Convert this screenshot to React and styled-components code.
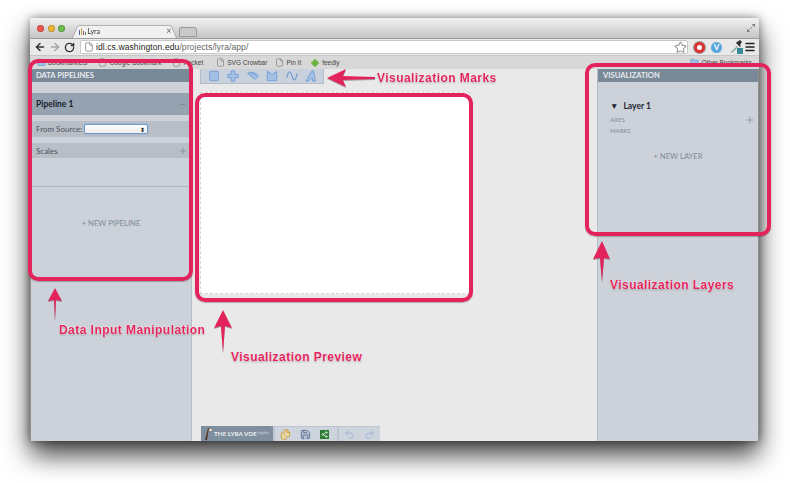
import React from "react";
import styled, { createGlobalStyle } from "styled-components";
import { ArrowLeft, ArrowRight, RotateCw, File, Folder, Star, Menu, Plus, Minus, Undo2, Redo2, Save, Files, Share2 } from "lucide-react";

const MARKS = ["rect", "symbol", "arc", "area", "line", "text"];

const ANNOTATIONS = [
  { text: "Visualization Marks", x: 377, y: 70 },
  { text: "Data Input Manipulation", x: 59, y: 322 },
  { text: "Visualization Preview", x: 231, y: 349 },
  { text: "Visualization Layers", x: 610, y: 277 },
];

const MarkIcon = ({ type }) => {
  const c = "#6f9ad0";
  return (
    <svg width="12" height="12" viewBox="0 0 14 14" fill="#a3c1e6" stroke={c} strokeWidth="1">
      {type === "rect" && <rect x="2" y="1.5" width="10" height="11" rx="1" />}
      {type === "symbol" && <path d="M5 1h4v4h4v4H9v4H5V9H1V5h4z" />}
      {type === "arc" && (
        <>
          <path d="M0.5 4c4-2 9-2 13 3l-4 4z" />
          <path d="M4 5c3-1 5 0 7 2" fill="none" />
        </>
      )}
      {type === "area" && <path d="M1.5 1.5 7 5l5.5-3v10.500h-11z" />}
      {type === "line" && <path d="M1 9c2-10 4-8 6-2s4 7 6-3" fill="none" strokeWidth="1.3" />}
      {type === "text" && <path d="M1 13 8 1h2l2 12H9l-.5-3H6l-1.500 3z" />}
    </svg>
  );
};

const App = () => {
  return (
    <Page>
      <GlobalStyle />
      <Window>
        <TabBar>
          <Light $color="#ee5a52" />
          <Light $color="#f0b437" />
          <Light $color="#70bd4d" />
          <Tab>
            <Favicon viewBox="0 0 8 8">
              <path d="M0 3h1v5H0z" fill="#46639c" />
              <path d="M2 1h1v7H2z" fill="#c9a13d" />
              <path d="M4 4h1v4H4z" fill="#a84b7a" />
              <path d="M6 5h1v3H6z" fill="#5a8a5a" />
            </Favicon>
            Lyra
            <TabClose>×</TabClose>
          </Tab>
          <NewTab />
          <Expand viewBox="0 0 10 10">
            <path d="M6 0h4v4zM0 10V6l4 4z" fill="#777" />
            <path d="M7 3 3 7" stroke="#777" />
          </Expand>
        </TabBar>
        <Toolbar>
          <ArrowLeft size={12} strokeWidth={3} color="#333" />
          <ArrowRight size={12} strokeWidth={3} color="#a5a5a5" />
          <RotateCw size={11} strokeWidth={3} color="#333" />
          <UrlBox>
            <File size={10} color="#888" />
            <Host>idl.cs.washington.edu</Host>
            <UrlPath>/projects/lyra/app/</UrlPath>
            <UrlStar size={13} color="#999" />
          </UrlBox>
          <OperaIcon />
          <VeeIcon>V</VeeIcon>
          <svg width="14" height="14" viewBox="0 0 14 14">
            <path d="M2 12 8 6l1 1-6 6z" fill="#8aa" />
            <path d="M8 2l3-2 2 2-2 3 1 1-1 1-4-4 1-1z" fill="#333" />
            <rect x="8" y="8" width="6" height="6" fill="#3a8a9a" />
          </svg>
          <Menu size={12} strokeWidth={3} color="#222" />
        </Toolbar>
        <BookmarkBar>
          <Bookmark>
            <Folder size={9} color="#6a9fd8" fill="#9cc0e6" />
            Bookmarklets
          </Bookmark>
          <Bookmark>
            <File size={9} color="#888" />
            Google Bookmark
          </Bookmark>
          <Bookmark $gap={13}>
            <File size={9} color="#888" />
            Pocket
          </Bookmark>
          <Bookmark $gap={8}>
            <File size={9} color="#888" />
            SVG Crowbar
          </Bookmark>
          <Bookmark>
            <File size={9} color="#888" />
            Pin It
          </Bookmark>
          <Bookmark>
            <FeedlyIcon />
            feedly
          </Bookmark>
          <OtherBookmarks>
            <Folder size={9} color="#6a9fd8" fill="#9cc0e6" />
            Other Bookmarks
          </OtherBookmarks>
        </BookmarkBar>
        <Content>
          <SidePanel>
            <PanelHeader>DATA PIPELINES</PanelHeader>
            <PipelineRow>
              Pipeline 1
              <Minus size={9} color="#75838f" />
            </PipelineRow>
            <SourceRow>
              From Source:
              <SourceSelect>
                <SelectArrows>⬍</SelectArrows>
              </SourceSelect>
            </SourceRow>
            <ScalesRow>
              Scales
              <Plus size={10} color="#88909a" />
            </ScalesRow>
            <NewPipeline>+ NEW PIPELINE</NewPipeline>
          </SidePanel>
          <Center>
            <MarksBar>
              {MARKS.map((m) => (
                <MarkIcon key={m} type={m} />
              ))}
            </MarksBar>
            <Canvas />
            <BottomBar>
              <Brand>
                <svg width="9" height="13" viewBox="0 0 9 13">
                  <path d="M1 13 4 1h1L3 13z" fill="#5a3a2a" />
                  <path d="M5 2h3v2H5z" fill="#e8c9a0" />
                </svg>
                <BrandName>THE LYRA VDE</BrandName>
                <Alpha>alpha</Alpha>
              </Brand>
              <ToolGroup>
                <Files size={11} color="#c49a3a" fill="#ecdca8" />
                <Save size={11} color="#5d6f92" fill="#b9c2d4" />
                <ShareBox>
                  <Share2 size={7} color="#fff" />
                </ShareBox>
              </ToolGroup>
              <ToolGroup>
                <Undo2 size={11} color="#9db4d8" />
                <Redo2 size={11} color="#9db4d8" />
              </ToolGroup>
            </BottomBar>
          </Center>
          <RightPanel>
            <PanelHeader>VISUALIZATION</PanelHeader>
            <LayerTitle>
              <LayerCaret>▼</LayerCaret>
              Layer 1
            </LayerTitle>
            <LayerRow>
              AXES
              <Plus size={10} color="#88909a" />
            </LayerRow>
            <LayerRow>MARKS</LayerRow>
            <NewLayer>+ NEW LAYER</NewLayer>
          </RightPanel>
        </Content>
      </Window>

      <Highlight $x={28} $y={59} $w={165} $h={222} />
      <Highlight $x={195} $y={93} $w={278} $h={209} />
      <Highlight $x={585} $y={63} $w={186} $h={173} />

      <Arrow $x={327} $y={68} viewBox="0 0 48 20" $w={48} $h={20}>
        <path d="M0 10 19 1l-3 7 32 1v2l-32 1 3 7z" />
      </Arrow>
      <Arrow $x={48} $y={288} viewBox="0 0 14 34" $w={14} $h={34}>
        <path d="M7 0l7 13-6-1-1 21-1-21-6 1z" />
      </Arrow>
      <Arrow $x={214} $y={310} viewBox="0 0 18 43" $w={18} $h={43}>
        <path d="M9 0l9 18-7-2-2 27-2-27-7 2z" />
      </Arrow>
      <Arrow $x={593} $y={241} viewBox="0 0 18 41" $w={18} $h={41}>
        <path d="M9 0l8 18-6-1-2 24-2-24-7 1z" />
      </Arrow>

      {ANNOTATIONS.map((a) => (
        <Label key={a.text} $x={a.x} $y={a.y}>
          {a.text}
        </Label>
      ))}
    </Page>
  );
};

export default App;

const GlobalStyle = createGlobalStyle`
  html, body {
    margin: 0;
    background: #fff;
    overflow: hidden;
  }
`;

const Page = styled.div`
  position: relative;
  box-sizing: border-box;
  width: 790px;
  height: 483px;
  padding: 18px 31px 42px 30px;
  font-family: "Lato", "Liberation Sans", sans-serif;
`;

const Window = styled.div`
  display: flex;
  flex-direction: column;
  height: 100%;
  box-shadow: 0 14px 26px rgba(0, 0, 0, 0.75), 0 0 8px rgba(0, 0, 0, 0.45);
  border-radius: 3px 3px 0 0;
`;

const TabBar = styled.div`
  display: flex;
  align-items: flex-end;
  height: 20px;
  padding-left: 7px;
  background: linear-gradient(#f2f2f2, #c4c4c4);
`;

const Light = styled.span`
  width: 7px;
  height: 7px;
  margin: 0 3.5px 6px 0;
  border-radius: 50%;
  background: ${(p) => p.$color};
  box-shadow: inset 0 0 0 1px rgba(0, 0, 0, 0.2);
`;

const Tab = styled.div`
  position: relative;
  isolation: isolate;
  display: flex;
  align-items: center;
  gap: 1px;
  box-sizing: border-box;
  width: 105px;
  height: 15px;
  margin-left: 3px;
  padding: 0 5px 0 7px;
  font-size: 7px;
  color: #333;
  &::before {
    content: "";
    position: absolute;
    inset: 0;
    z-index: -1;
    background: #f1f1f1;
    border: 1px solid #aaa;
    border-bottom: 0;
    border-radius: 3px 3px 0 0;
    transform-origin: bottom;
    transform: perspective(30px) rotateX(14deg);
  }
`;

const Favicon = styled.svg`
  width: 8px;
  height: 8px;
`;

const TabClose = styled.span`
  margin-left: auto;
  font-size: 9px;
  color: #666;
`;

const NewTab = styled.div`
  width: 16px;
  height: 8px;
  margin: 0 0 1px 2px;
  border: 1px solid #999;
  border-radius: 2px 3px 0 0;
  background: #c9c9c9;
`;

const Expand = styled.svg`
  width: 8px;
  height: 8px;
  margin: 0 4px 6px auto;
`;

const Toolbar = styled.div`
  display: flex;
  align-items: center;
  gap: 1px;
  height: 16px;
  padding: 0 3px;
  background: #e9e9e9;
  border-top: 1px solid #9d9d9d;
  svg:nth-child(-n + 3) {
    margin-right: 1px;
    margin-left: 1px;
  }
`;

const UrlBox = styled.div`
  display: flex;
  align-items: center;
  flex: 1;
  height: 12px;
  margin: 0 3px;
  padding: 0 0 0 2px;
  background: #fff;
  border: 1px solid #c8c8c8;
  border-radius: 2px;
  font-family: "Liberation Sans", sans-serif;
  font-size: 8.5px;
  letter-spacing: 0.1px;
`;

const Host = styled.span`
  margin-left: 1px;
  color: #222;
`;

const UrlPath = styled.span`
  color: #666;
`;

const UrlStar = styled(Star)`
  margin-left: auto;
`;

const OperaIcon = styled.span`
  box-sizing: border-box;
  width: 11px;
  height: 11px;
  margin: 0 2px;
  border-radius: 50%;
  border: 3px solid #d33;
  background: #fff;
  box-shadow: 0 0 0 1px #999;
`;

const VeeIcon = styled.span`
  display: flex;
  align-items: center;
  justify-content: center;
  width: 11px;
  height: 11px;
  margin: 0 6px 0 3px;
  border-radius: 50%;
  background: #58a8de;
  color: #fff;
  font-size: 8px;
  font-weight: 700;
`;

const BookmarkBar = styled.div`
  display: flex;
  align-items: center;
  height: 13px;
  padding-left: 7px;
  background: #d8d8d8;
  border-top: 1px solid #c6c6c6;
  font-family: "Liberation Sans", sans-serif;
  font-size: 6.5px;
  color: #444;
`;

const Bookmark = styled.span`
  display: flex;
  align-items: center;
  gap: 2px;
  margin-right: ${(p) => p.$gap ?? 11}px;
  white-space: nowrap;
`;

const FeedlyIcon = styled.span`
  width: 6px;
  height: 6px;
  margin-right: 2px;
  background: #6cb33f;
  transform: rotate(45deg);
`;

const OtherBookmarks = styled(Bookmark)`
  margin: 0 7px 0 auto;
`;

const Content = styled.div`
  display: flex;
  flex: 1;
  min-height: 0;
  background: #e9e9e9;
`;

const SidePanel = styled.div`
  display: flex;
  flex-direction: column;
  width: 160px;
  background: #cdd2da;
  border-left: 1px solid #8f8f8f;
  border-right: 1px solid #b5bdc6;
`;

const RightPanel = styled(SidePanel)`
  margin-left: auto;
  border-left: 1px solid #b5bdc6;
  border-right: 1px solid #8f8f8f;
`;

const PanelHeader = styled.div`
  height: 13px;
  padding-left: 5px;
  background: #7a8998;
  color: #e8ecf0;
  font-size: 7.6px;
  font-weight: 700;
  line-height: 13px;
`;

const PipelineRow = styled.div`
  display: flex;
  align-items: center;
  justify-content: space-between;
  height: 22px;
  margin-top: 11px;
  padding: 0 4px 0 5px;
  background: #95a3b1;
  color: #15202b;
  font-size: 8.5px;
  font-weight: 700;
`;

const SourceRow = styled.div`
  display: flex;
  align-items: center;
  gap: 2px;
  height: 16px;
  margin-top: 6px;
  padding-left: 5px;
  background: #b8bdc6;
  color: #4c5560;
  font-size: 8px;
`;

const SourceSelect = styled.div`
  display: flex;
  align-items: center;
  justify-content: flex-end;
  box-sizing: border-box;
  width: 64px;
  height: 10px;
  padding-right: 2px;
  border: 1px solid #6f9bd4;
  border-radius: 2px;
  background: linear-gradient(#fff, #ececec);
  box-shadow: 0 0 1px #5e8fd0;
`;

const SelectArrows = styled.span`
  font-size: 6px;
  line-height: 7px;
  color: #222;
`;

const ScalesRow = styled.div`
  display: flex;
  align-items: center;
  justify-content: space-between;
  height: 15px;
  margin-top: 6px;
  padding: 0 3px 0 5px;
  background: #b8bdc6;
  color: #4c5560;
  font-size: 8px;
`;

const NewPipeline = styled.div`
  display: flex;
  justify-content: center;
  margin-top: 28px;
  padding-top: 31px;
  border-top: 1px solid #aeb8c2;
  color: #7e8a99;
  font-size: 7.7px;
`;

const Center = styled.div`
  display: flex;
  flex-direction: column;
  align-items: flex-start;
  padding-left: 8px;
`;

const MarksBar = styled.div`
  display: flex;
  align-items: center;
  gap: 7.4px;
  box-sizing: border-box;
  width: 124px;
  height: 15px;
  padding: 0 4px 0 7px;
  background: #c9d1dc;
  border: 1px solid #b4bec9;
  border-top: 0;
`;

const Canvas = styled.div`
  box-sizing: border-box;
  width: 270px;
  height: 202px;
  margin-top: 8px;
  background: #fff;
  border: 1px dashed #d5d5d5;
`;

const BottomBar = styled.div`
  display: flex;
  height: 15px;
  margin: auto 0 0 1px;
  background: #cdd4dd;
`;

const Brand = styled.div`
  display: flex;
  align-items: center;
  gap: 1px;
  width: 72px;
  padding-left: 3px;
  box-sizing: border-box;
  background: #7f8f9f;
`;

const BrandName = styled.span`
  color: #eef1f4;
  font-size: 6.3px;
  font-weight: 700;
  white-space: nowrap;
`;

const Alpha = styled.span`
  margin-bottom: 3px;
  color: #d5dbe1;
  font-size: 4.5px;
`;

const ToolGroup = styled.div`
  display: flex;
  align-items: center;
  gap: 9px;
  padding: 0 5px;
  border-left: 2px solid #bcc5d0;
  border-top: 1px solid #bcc5d0;
  &:nth-child(2) {
    padding-left: 5px;
    width: 64px;
    box-sizing: border-box;
  }
`;

const ShareBox = styled.span`
  display: flex;
  align-items: center;
  justify-content: center;
  width: 9px;
  height: 9px;
  background: #2f7d32;
`;

const LayerTitle = styled.div`
  margin: 16px 0 0 12px;
  color: #1d2630;
  font-size: 8.5px;
  font-weight: 700;
  line-height: 16px;
`;

const LayerCaret = styled.span`
  margin-right: 5px;
`;

const LayerRow = styled.div`
  display: flex;
  align-items: center;
  justify-content: space-between;
  height: 11px;
  padding: 0 3px 0 12px;
  color: #7e8a99;
  font-size: 6px;
`;

const NewLayer = styled.div`
  margin-top: 15px;
  text-align: center;
  color: #7e8a99;
  font-size: 7.7px;
`;

// annotations drawn over the screenshot
const Highlight = styled.div`
  position: absolute;
  box-sizing: border-box;
  left: ${(p) => p.$x}px;
  top: ${(p) => p.$y}px;
  width: ${(p) => p.$w}px;
  height: ${(p) => p.$h}px;
  border: 4px solid #e3245c;
  border-radius: 10px;
  box-shadow: 0 1px 1px rgba(0, 0, 0, 0.25);
`;

const Arrow = styled.svg`
  position: absolute;
  left: ${(p) => p.$x}px;
  top: ${(p) => p.$y}px;
  width: ${(p) => p.$w}px;
  height: ${(p) => p.$h}px;
  fill: #e3245c;
  filter: drop-shadow(0 1px 0.5px rgba(0, 0, 0, 0.3));
`;

const Label = styled.span`
  position: absolute;
  left: ${(p) => p.$x}px;
  top: ${(p) => p.$y}px;
  color: #e3245c;
  font-family: "Liberation Sans", sans-serif;
  font-size: 12px;
  font-weight: 700;
  line-height: 16px;
  letter-spacing: 0.45px;
  white-space: nowrap;
  text-shadow: 0 0 1px #fff, 0 0 2px #fff, 0 1px 2px rgba(0, 0, 0, 0.4);
`;
